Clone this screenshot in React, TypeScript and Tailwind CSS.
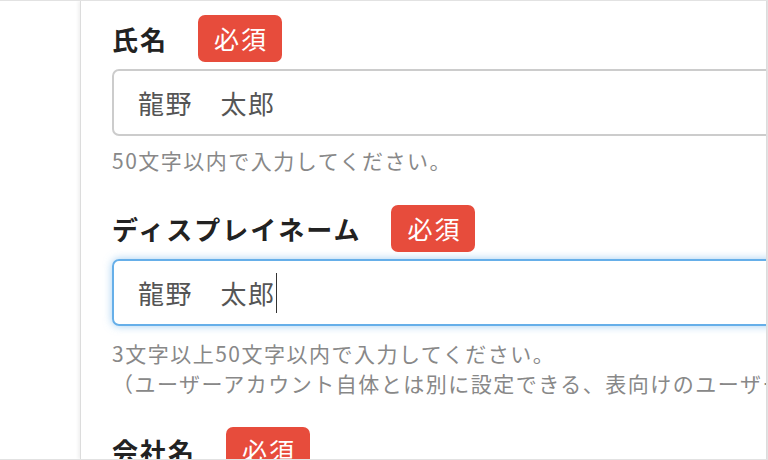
import React from "react";

const font = { fontFamily: '"Noto Sans CJK JP", "Noto Sans", sans-serif' };

function Badge() {
  return (
    <span className="ml-[30px] inline-flex h-[47px] w-[84px] items-center justify-center rounded-[7px] bg-[#e74c3c] pl-[2px] text-[25px] leading-none tracking-[2px] text-white">
      必須
    </span>
  );
}

function Label({ text }: { text: string }) {
  return (
    <div className="flex items-center">
      <span className="text-[26px] font-bold leading-none tracking-[2px] text-[#222]">{text}</span>
      <Badge />
    </div>
  );
}

export default function App() {
  return (
    <div
      className="flex h-[460px] w-[768px] overflow-hidden border-y border-r border-[#e2e2e2] bg-white"
      style={font}
    >
      <div className="w-[80px] shrink-0 bg-white" />
      <div className="flex-1 overflow-hidden border-x border-[#dcdcdc] pl-[31px] pt-[14px] shadow-[-2px_0_3px_rgba(0,0,0,0.06)]">
        <Label text="氏名" />
        <div className="mt-[7px] flex h-[67px] w-[700px] items-center rounded-[7px] border-2 border-[#cccccc] pl-[24px] text-[26px] tracking-[1.5px] text-[#555]">
          龍野　太郎
        </div>
        <div className="mt-[9px] text-[21px] leading-[30px] tracking-[1.5px] text-[#888]">
          50文字以内で入力してください。
        </div>

        <div className="mt-[30px]">
          <Label text="ディスプレイネーム" />
        </div>
        <div className="mt-[7px] flex h-[67px] w-[700px] items-center rounded-[7px] border-2 border-[#66afe9] pl-[24px] text-[26px] tracking-[1.5px] text-[#555] shadow-[0_0_8px_rgba(102,175,233,0.6)]">
          龍野　太郎
          <span className="inline-block h-[40px] w-px bg-[#333]" />
        </div>
        <div className="mt-[12px] whitespace-nowrap text-[21px] leading-[30px] tracking-[1.5px] text-[#888]">
          <div>3文字以上50文字以内で入力してください。</div>
          <div>（ユーザーアカウント自体とは別に設定できる、表向けのユーザー名です。）</div>
        </div>

        <div className="mt-[29px]">
          <Label text="会社名" />
        </div>
      </div>
    </div>
  );
}
